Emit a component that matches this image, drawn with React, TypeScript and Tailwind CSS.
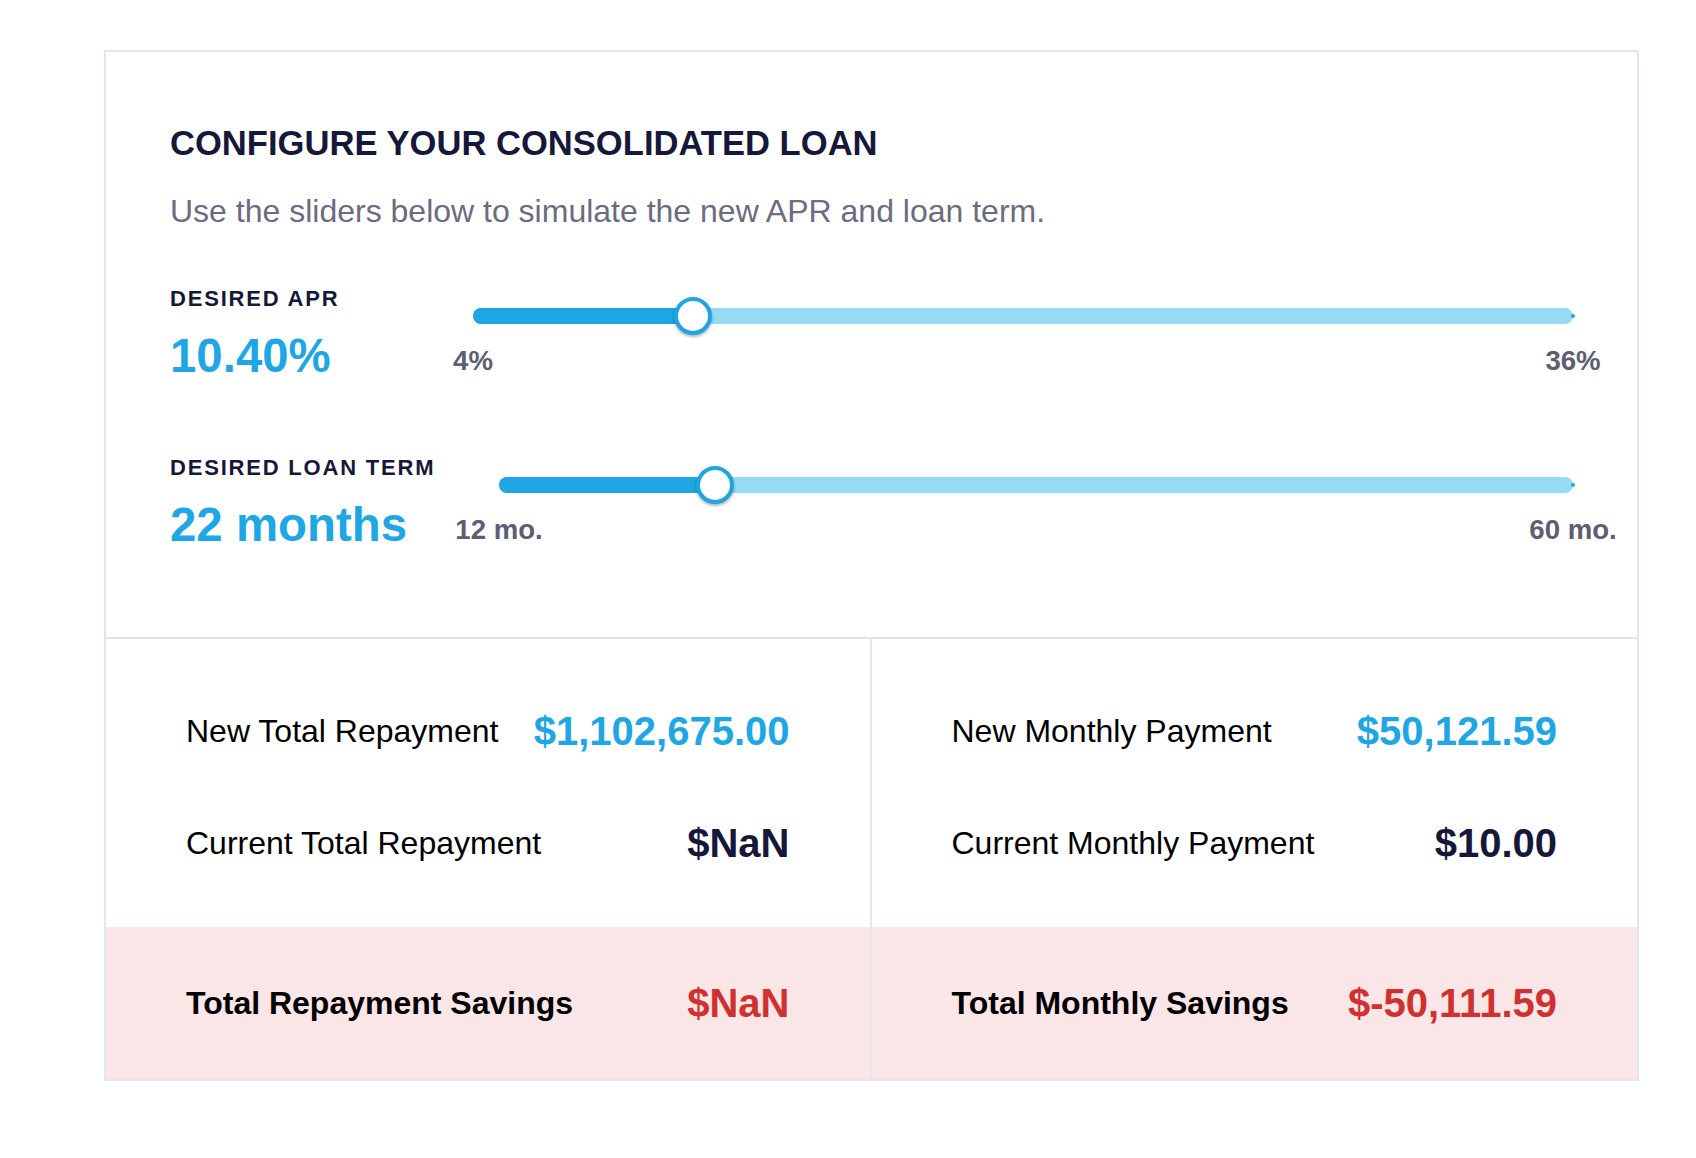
const sliders = [
  {
    label: 'DESIRED APR',
    value: '10.40%',
    min: '4%',
    max: '36%',
    // (10.4 - 4) / (36 - 4)
    pct: ((10.4 - 4) / (36 - 4)) * 100,
    inset: 'ml-[18px]',
  },
  {
    label: 'DESIRED LOAN TERM',
    value: '22 months',
    min: '12 mo.',
    max: '60 mo.',
    pct: 20.1,
    inset: 'ml-[44px]',
  },
]

const left = [
  { label: 'New Total Repayment', value: '$1,102,675.00', tone: 'text-[#1fa6e4]' },
  { label: 'Current Total Repayment', value: '$NaN', tone: 'text-[#16183a]' },
]

const right = [
  { label: 'New Monthly Payment', value: '$50,121.59', tone: 'text-[#1fa6e4]' },
  { label: 'Current Monthly Payment', value: '$10.00', tone: 'text-[#16183a]' },
]

const Slider = ({ pct }: { pct: number }) => {
  return (
    <div className="relative flex h-[38px] items-center">
      <div className="relative h-[16px] w-full rounded-full bg-[#96daf4]">
        <div
          className="h-full rounded-full bg-[#1fa5e3]"
          style={{ width: `${pct}%` }}
        />
        <span className="absolute right-[-2px] top-1/2 h-[4px] w-[4px] -translate-y-1/2 rounded-full bg-[#1fa5e3]" />
      </div>
      <div
        className="absolute top-1/2 h-[38px] w-[38px] -translate-x-1/2 -translate-y-1/2 rounded-full border-4 border-[#1fa5e3] bg-white shadow-[0_2px_3px_rgba(0,0,0,0.3)]"
        style={{ left: `${pct}%` }}
      />
    </div>
  )
}

const SliderRow = ({ item, first }) => {
  return (
    <div className={`flex items-start ${first ? 'mt-[55px]' : 'mt-[72px]'}`}>
      <div className="w-[285px] shrink-0">
        <div className="text-[22px] font-bold leading-[26px] tracking-[1.8px] text-[#16183a]">
          {item.label}
        </div>
        <div className="mt-[17px] text-[47.4px] font-bold leading-[54px] text-[#1fa6e4]">
          {item.value}
        </div>
      </div>
      <div className={`flex-1 pt-[11px] ${item.inset}`}>
        <Slider pct={item.pct} />
        <div className="mt-[10px] flex justify-between text-[27.6px] font-bold leading-[32px] text-[#5d5e72]">
          <div className="flex w-0 justify-center">
            <span className="whitespace-nowrap">{item.min}</span>
          </div>
          <div className="flex w-0 justify-center">
            <span className="whitespace-nowrap">{item.max}</span>
          </div>
        </div>
      </div>
    </div>
  )
}

const Column = ({ rows, total, last }) => {
  return (
    <div className={`flex flex-col ${last ? '' : 'border-r-2 border-[#e3e5ee]'}`}>
      <div className="flex flex-col gap-[56px] px-[80px] pb-[56px] pt-[64px]">
        {rows.map((row) => (
          <div key={row.label} className="flex h-[56px] items-center justify-between">
            <span className="text-[32px] leading-[40px] text-black">{row.label}</span>
            <span className={`text-[40px] font-bold leading-[48px] ${row.tone}`}>
              {row.value}
            </span>
          </div>
        ))}
      </div>
      <div className="flex h-[152px] items-center justify-between bg-[#fae6e6] px-[80px]">
        <span className="text-[32px] font-bold leading-[40px] text-black">{total.label}</span>
        <span className="text-[40px] font-bold leading-[48px] text-[#d0302f]">
          {total.value}
        </span>
      </div>
    </div>
  )
}

const App = () => {
  return (
    <div className="min-h-screen bg-white pt-[50px] pl-[104px] font-['Liberation_Sans',Arial,sans-serif]">
      <div className="w-[1535px] border-2 border-[#e3e5ee]">
        <div className="border-b-2 border-[#e3e5ee] px-[64px] pb-[85px] pt-[71px]">
          <h1 className="text-[34.6px] font-bold leading-[40px] text-[#16183a]">
            CONFIGURE YOUR CONSOLIDATED LOAN
          </h1>
          <p className="mt-[28px] text-[32px] leading-[40px] text-[#6b6c80]">
            Use the sliders below to simulate the new APR and loan term.
          </p>
          {sliders.map((item, i) => (
            <SliderRow key={item.label} item={item} first={i === 0} />
          ))}
        </div>
        <div className="grid grid-cols-2">
          <Column
            rows={left}
            total={{ label: 'Total Repayment Savings', value: '$NaN' }}
          />
          <Column
            rows={right}
            total={{ label: 'Total Monthly Savings', value: '$-50,111.59' }}
            last
          />
        </div>
      </div>
    </div>
  )
}

export default App
